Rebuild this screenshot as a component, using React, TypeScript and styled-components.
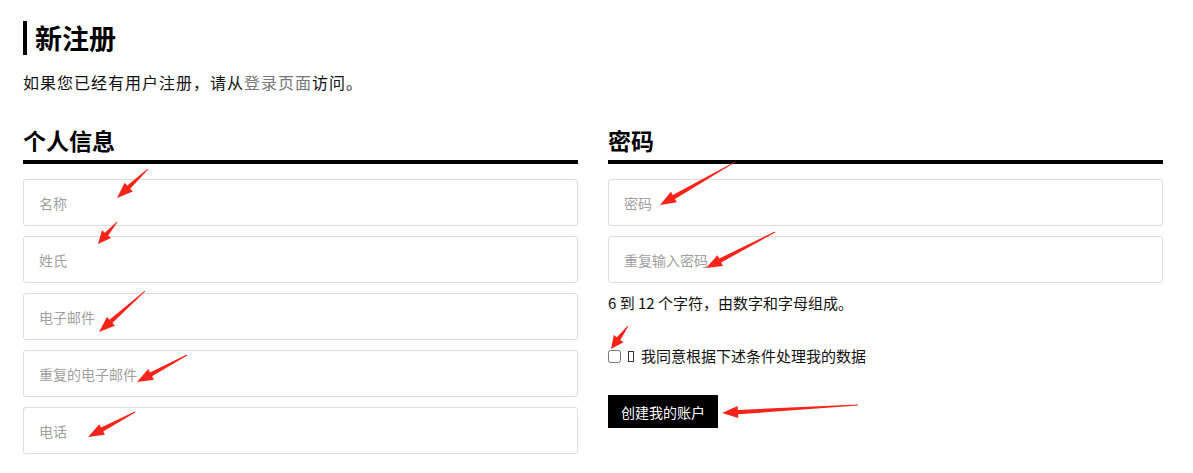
import React from "react";
import styled, { createGlobalStyle } from "styled-components";

const GlobalStyle = createGlobalStyle`
  body {
    margin: 0;
    background: #fff;
    font-family: "Noto Sans CJK SC", "Noto Sans", sans-serif;
    color: #111;
  }
`;

const Page = styled.div`
  position: relative;
  width: 1140px;
  padding: 21px 30px 0 23px;
`;

const Title = styled.h1`
  margin: 0;
  height: 34px;
  line-height: 34px;
  border-left: 4px solid #000;
  padding-left: 8px;
  font-size: 27px;
  font-weight: 700;
  color: #000;
`;

const Intro = styled.p`
  margin: 15px 0 0;
  font-size: 16px;
  line-height: 24px;
  letter-spacing: 1px;
`;

const Link = styled.a`
  color: #777;
  text-decoration: none;
`;

const Columns = styled.div`
  display: grid;
  grid-template-columns: 555px 555px;
  column-gap: 30px;
  margin-top: 31px;
`;

const Column = styled.section`
  display: flex;
  flex-direction: column;
`;

const Heading = styled.h2`
  margin: 0 0 15px;
  font-size: 23px;
  line-height: 30px;
  font-weight: 700;
  color: #000;
  padding-bottom: 5px;
  border-bottom: 4px solid #000;
`;

const Fields = styled.div`
  display: flex;
  flex-direction: column;
  gap: 10px;
`;

const Field = styled.input`
  box-sizing: border-box;
  width: 100%;
  height: 47px;
  margin: 0;
  padding: 0 15px;
  border: 1px solid #ddd;
  border-radius: 3px;
  font-family: inherit;
  font-size: 14px;
  color: #333;
  outline: none;
  &::placeholder {
    color: #a0a0a0;
  }
`;

const Hint = styled.p`
  margin: 10px 0 0;
  font-size: 15px;
  line-height: 20px;
`;

const Consent = styled.label`
  display: flex;
  align-items: center;
  margin-top: 33px;
  font-size: 15px;
  line-height: 20px;
`;

const Check = styled.input`
  width: 13px;
  height: 13px;
  margin: 0 7px 0 0;
`;

const Tofu = styled.span`
  display: inline-block;
  box-sizing: border-box;
  width: 6px;
  height: 11px;
  border: 1px solid #333;
  margin-right: 7px;
`;

const Submit = styled.button`
  align-self: flex-start;
  margin-top: 29px;
  height: 33px;
  padding: 0 13px;
  border: none;
  border-radius: 0;
  background: #000;
  color: #fff;
  font-family: inherit;
  font-size: 14px;
  cursor: pointer;
`;

const Overlay = styled.svg`
  position: absolute;
  left: 0;
  top: 0;
  pointer-events: none;
`;

type Arrow = [number, number, number, number];

// annotation arrows: tail x, tail y, tip x, tip y
const arrows: Arrow[] = [
  [148, 169, 117, 198],
  [117, 222, 98, 244],
  [145, 291, 99, 332],
  [187, 355, 137, 382],
  [135, 412, 88, 437],
  [735, 162, 660, 205],
  [775, 232, 706, 268],
  [628, 326, 611, 349],
  [858, 405, 722, 413],
];

const arrowPoints = ([tx, ty, px, py]: Arrow) => {
  const dx = px - tx;
  const dy = py - ty;
  const len = Math.hypot(dx, dy);
  const ux = dx / len;
  const uy = dy / len;
  const nx = -uy;
  const ny = ux;
  const head = Math.min(16, len * 0.45);
  const hx = px - ux * head;
  const hy = py - uy * head;
  const pts: [number, number][] = [
    [tx + nx * 0.4, ty + ny * 0.4],
    [hx + nx * 2.2, hy + ny * 2.2],
    [hx + nx * 6, hy + ny * 6],
    [px, py],
    [hx - nx * 6, hy - ny * 6],
    [hx - nx * 2.2, hy - ny * 2.2],
    [tx - nx * 0.4, ty - ny * 0.4],
  ];
  return pts.map((p) => p.map((v) => v.toFixed(1)).join(",")).join(" ");
};

const App: React.FC = () => {
  return (
    <>
      <GlobalStyle />
      <Page>
        <Title>新注册</Title>
        <Intro>
          如果您已经有用户注册，请从<Link href="#">登录页面</Link>访问。
        </Intro>
        <Columns>
          <Column>
            <Heading>个人信息</Heading>
            <Fields>
              <Field placeholder="名称" />
              <Field placeholder="姓氏" />
              <Field placeholder="电子邮件" />
              <Field placeholder="重复的电子邮件" />
              <Field placeholder="电话" />
            </Fields>
          </Column>
          <Column>
            <Heading>密码</Heading>
            <Fields>
              <Field type="password" placeholder="密码" />
              <Field type="password" placeholder="重复输入密码" />
            </Fields>
            <Hint>6 到 12 个字符，由数字和字母组成。</Hint>
            <Consent>
              <Check type="checkbox" />
              <Tofu />
              我同意根据下述条件处理我的数据
            </Consent>
            <Submit type="button">创建我的账户</Submit>
          </Column>
        </Columns>
        <Overlay width="1193" height="473" viewBox="0 0 1193 473">
          {arrows.map((a, i) => (
            <polygon key={i} points={arrowPoints(a)} fill="#f8241a" />
          ))}
        </Overlay>
      </Page>
    </>
  );
};

export default App;
